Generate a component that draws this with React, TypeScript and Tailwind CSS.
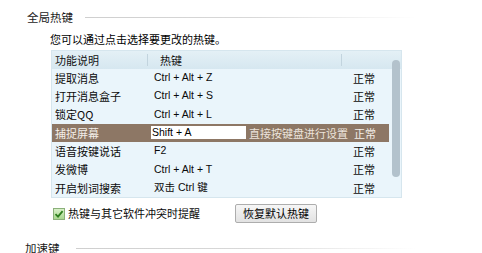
import React from "react";

const rows: { name: string; key: string; selected?: boolean }[] = [
  { name: "提取消息", key: "Ctrl + Alt + Z" },
  { name: "打开消息盒子", key: "Ctrl + Alt + S" },
  { name: "锁定QQ", key: "Ctrl + Alt + L" },
  { name: "捕捉屏幕", key: "Shift + A", selected: true },
  { name: "语音按键说话", key: "F2" },
  { name: "发微博", key: "Ctrl + Alt + T" },
  { name: "开启划词搜索", key: "双击 Ctrl 键" },
];

const font = { fontFamily: '"Microsoft YaHei", "Noto Sans CJK SC", sans-serif' };
const latin = { fontFamily: '"Liberation Sans", "Noto Sans CJK SC", sans-serif', fontSize: "10.5px" };

export default function App() {
  return (
    <div
      className="w-[482px] h-[253px] bg-white overflow-hidden text-[11px] text-[#0a0a0a] flex flex-col"
      style={font}
    >
      {/* section title */}
      <div className="flex items-center pl-[27px] pt-[10px] h-[24px]">
        <span className="text-[11.5px] leading-[14px] text-[#1a1a1a]">全局热键</span>
        <div className="ml-[12px] h-px w-[330px] bg-gradient-to-r from-[#cfcfcf] via-[#d8d8d8] to-[#ffffff]" />
      </div>

      <div className="pl-[50px] mt-[8px] leading-[14px] text-[#000]">您可以通过点击选择要更改的热键。</div>

      {/* table */}
      <div className="ml-[51px] mt-[4px] w-[351px] h-[148px] border border-[#d6e6ee] bg-[#eaf5fb] flex flex-col relative">
        <div className="h-[18px] flex items-center bg-gradient-to-b from-[#e4f0f6] to-[#d6e7f0] text-[#111]">
          <div className="w-[95px] pl-[3px]">功能说明</div>
          <div className="w-px h-[12px] bg-[#c2d4de]" />
          <div className="w-[193px] pl-[12px]">热键</div>
          <div className="w-px h-[12px] bg-[#c2d4de]" />
          <div className="flex-1" />
        </div>
        {rows.map((r) => (
          <div
            key={r.name}
            className={
              "h-[18.4px] w-[337px] flex items-center " +
              (r.selected ? "bg-[#8d7765] text-[#f4efe9]" : "")
            }
          >
            <div className="w-[96px] pl-[3px] whitespace-nowrap">{r.name}</div>
            {r.selected ? (
              <>
                <div
                  className="ml-[3px] w-[95px] h-[13px] bg-white text-[#000] pl-[1px] leading-[13px]"
                  style={latin}
                >
                  {r.key}
                </div>
                <div className="ml-[3px] w-[104px] whitespace-nowrap text-[#ece4dc]">直接按键盘进行设置</div>
              </>
            ) : (
              <div className="ml-[6px] w-[198px] whitespace-nowrap" style={latin}>
                {r.key}
              </div>
            )}
            <div className="ml-[1px] whitespace-nowrap">正常</div>
          </div>
        ))}
        {/* scrollbar */}
        <div className="absolute right-0 top-[8px] bottom-0 w-[10px]">
          <div className="mx-auto mt-[1px] w-[8px] h-[117px] rounded-full bg-[#b3c2cc]" />
        </div>
      </div>

      {/* check + button */}
      <div className="flex items-center mt-[6px] h-[22px]">
        <div className="ml-[53px] w-[12px] h-[12px] border border-[#8bb07a] bg-gradient-to-b from-[#d8f0c8] to-[#a9d78f] flex items-center justify-center">
          <svg width="10" height="10" viewBox="0 0 10 10">
            <path d="M1.5 5.2 L4 7.6 L8.6 2.2" stroke="#2f7f1e" strokeWidth="1.8" fill="none" />
          </svg>
        </div>
        <span className="ml-[3px] whitespace-nowrap">热键与其它软件冲突时提醒</span>
        <button className="ml-[35px] w-[82px] h-[19px] border border-[#adadad] rounded-[2px] bg-gradient-to-b from-[#f6f6f6] to-[#e2e2e2] text-[11px] leading-[17px] text-[#000]">
          恢复默认热键
        </button>
      </div>

      <div className="flex items-center pl-[25px] mt-[18px] h-[14px]">
        <span className="text-[11.5px] leading-[14px] text-[#1a1a1a]">加速键</span>
        <div className="ml-[16px] h-px w-[340px] bg-gradient-to-r from-[#cfcfcf] via-[#d8d8d8] to-[#ffffff]" />
      </div>
    </div>
  );
}
